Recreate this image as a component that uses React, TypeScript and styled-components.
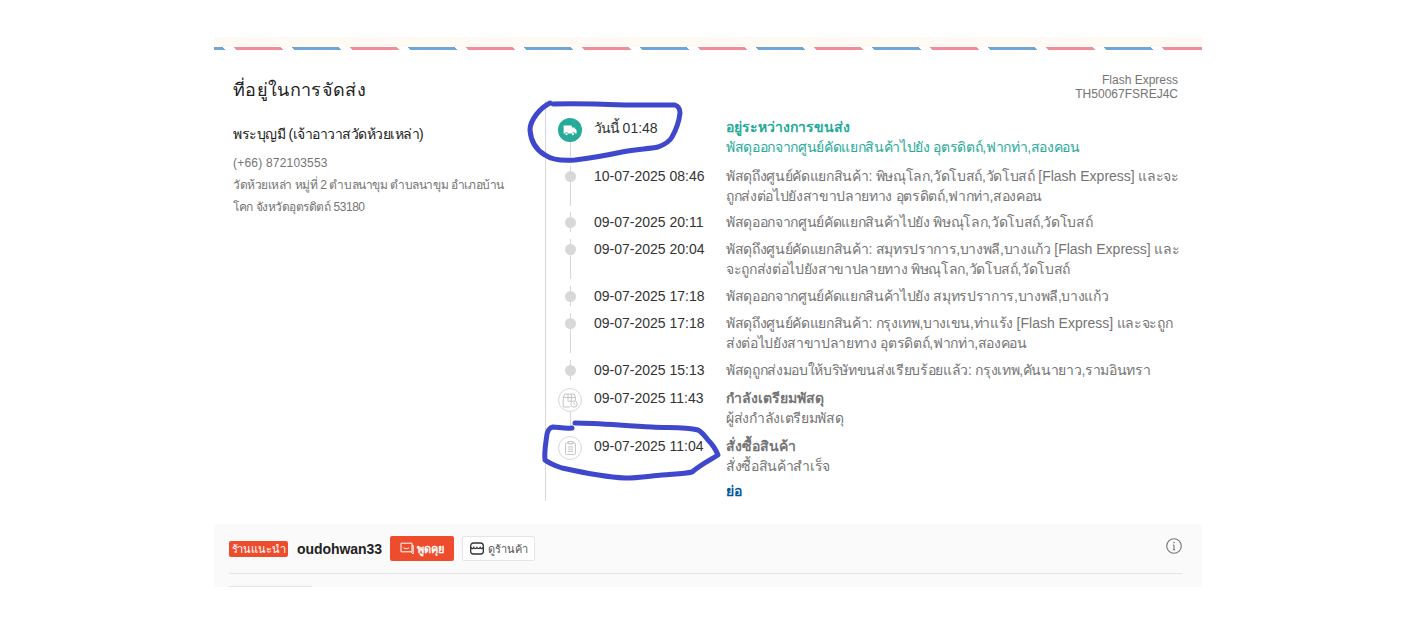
import React from "react";
import styled, { createGlobalStyle } from "styled-components";

const Global = createGlobalStyle`
  html, body { margin: 0; padding: 0; background: #fff; }
  body { font-family: "Liberation Sans", "Noto Sans", sans-serif; }
`;

const Page = styled.div`
  position: relative;
  width: 1416px;
  height: 624px;
  overflow: hidden;
  background: #fff;
  padding-top: 37px;
  box-sizing: border-box;
`;

const Card = styled.div`
  width: 988px;
  margin: 0 auto;
  height: 550px;
  overflow: hidden;
`;

const Cream = styled.div`
  height: 10px;
  background: #fffbf4;
`;

const Stripe = styled.div`
  height: 3px;
  background-image: repeating-linear-gradient(45deg, #6fa6d6, #6fa6d6 33px, transparent 0, transparent 41px, #f18d9b 0, #f18d9b 74px, transparent 0, transparent 82px);
  background-size: 116.0155px 3px;
  background-position-x: -35px;
`;

const Main = styled.div`
  display: flex;
  height: 474px;
  padding: 0 24px 24px 18px;
  box-sizing: border-box;
`;

const AddressCol = styled.div`
  width: 313px;
  flex: none;
`;

const Title = styled.h2`
  margin: 27px 0 0 1px;
  font-size: 18px;
  line-height: 26px;
  font-weight: 400;
  letter-spacing: 0.35px;
  color: #222;
`;

const Name = styled.div`
  margin: 21px 0 0 1px;
  font-size: 14px;
  line-height: 20px;
  letter-spacing: -0.5px;
  color: #222;
`;

const Contact = styled.div`
  margin: 8px 0 0 1px;
  font-size: 12px;
  line-height: 22px;
  color: #757575;
`;

const AddressLine = styled.div<{ $latin?: boolean }>`
  white-space: nowrap;
  letter-spacing: ${(p) => (p.$latin ? "0.2px" : "-0.45px")};
`;

const TrackCol = styled.div`
  flex: 1;
  min-width: 0;
  display: flex;
  flex-direction: column;
`;

const Carrier = styled.div`
  margin-top: 23px;
  height: 28px;
  font-size: 12px;
  line-height: 14px;
  color: #757575;
  text-align: right;
`;

const Timeline = styled.div`
  flex: 1;
  border-left: 1px solid #d8d8d8;
  display: flex;
  flex-direction: column;
  padding-top: 17px;
`;

const Row = styled.div<{ $pad: number }>`
  display: flex;
  padding-bottom: ${(p) => p.$pad}px;
`;

const NodeCol = styled.div<{ $edge?: "first" | "last" }>`
  width: 48px;
  flex: none;
  display: flex;
  justify-content: center;
  align-items: flex-start;
  background-image: linear-gradient(#d8d8d8, #d8d8d8);
  background-repeat: no-repeat;
  background-position: ${(p) => (p.$edge === "first" ? "center 12px" : "center top")};
  background-size: ${(p) => (p.$edge === "last" ? "1px 12px" : "1px 100%")};
`;

const Dot = styled.span`
  width: 11px;
  height: 11px;
  margin-top: 5px;
  border-radius: 50%;
  background: #d8d8d8;
`;

const Badge = styled.span<{ $active?: boolean }>`
  width: 24px;
  height: 24px;
  box-sizing: border-box;
  border-radius: 50%;
  display: flex;
  align-items: center;
  justify-content: center;
  background: ${(p) => (p.$active ? "#26aa99" : "#fff")};
  border: ${(p) => (p.$active ? "none" : "1px solid #d8d8d8")};
`;

const Time = styled.div`
  width: 132px;
  flex: none;
  font-size: 14px;
  line-height: 20px;
  color: #333;
`;

const ThaiDay = styled.span`
  letter-spacing: -1.1px;
`;

const Desc = styled.div<{ $active?: boolean }>`
  width: 452px;
  flex: none;
  font-size: 14px;
  line-height: 20px;
  color: ${(p) => (p.$active ? "#26aa99" : "#757575")};
`;

const DescLine = styled.div`
  white-space: nowrap;
  letter-spacing: -0.33px;
`;

const Latin = styled.span`
  letter-spacing: 0;
`;

const Status = styled.div<{ $tight?: boolean }>`
  font-weight: 700;
  line-height: ${(p) => (p.$tight ? "19px" : "20px")};
`;

const Collapse = styled.div`
  margin-left: 180px;
  font-size: 14px;
  line-height: 20px;
  font-weight: 700;
  color: #05589c;
`;

const Shop = styled.div`
  height: 63px;
  background: #fafafa;
  padding: 0 20px 0 15px;
  box-sizing: border-box;
  overflow: hidden;
`;

const ShopBar = styled.div`
  height: 49px;
  display: flex;
  align-items: center;
  border-bottom: 1px solid #e5e5e5;
`;

const Tag = styled.span`
  height: 16px;
  width: 59px;
  text-align: center;
  background: #ee4d2d;
  border-radius: 2px;
  color: #fff;
  font-size: 11px;
  line-height: 16px;
  letter-spacing: -0.15px;
  white-space: nowrap;
`;

const ShopName = styled.span`
  margin-left: 9px;
  width: 85px;
  font-size: 14px;
  font-weight: 700;
  letter-spacing: -0.05px;
  color: #222;
`;

const ChatBtn = styled.button`
  margin-left: 8px;
  height: 25px;
  width: 64px;
  padding: 0;
  border: none;
  border-radius: 2px;
  background: #ee4d2d;
  color: #fff;
  font: inherit;
  font-size: 11px;
  font-weight: 700;
  display: flex;
  align-items: center;
  justify-content: center;
  gap: 3px;
`;

const ShopBtn = styled.button`
  margin-left: 8px;
  height: 25px;
  width: 73px;
  padding: 0;
  border: 1px solid #e5e5e5;
  border-radius: 2px;
  background: #fff;
  color: #555;
  font: inherit;
  font-size: 11px;
  display: flex;
  align-items: center;
  justify-content: center;
  gap: 4px;
`;

const InfoBtn = styled.span`
  margin-left: auto;
  display: flex;
  margin-top: -6px;
  margin-right: 0.5px;
`;

const NextBar = styled.div`
  margin-top: 12px;
  width: 83px;
  height: 1px;
  background: #e5e5e5;
`;

const Scribble = styled.svg`
  position: absolute;
  inset: 0;
  pointer-events: none;
`;

const TruckIcon = () => (
  <svg width="14" height="11" viewBox="0 0 14 11" fill="#fff">
    <path d="M0.600 0.500h8.200v2h2.600l2.200 2.900v3.100h-1.300a1.700 1.700 0 0 0-3.300 0H5.200a1.700 1.700 0 0 0-3.300 0H0.600z" />
    <circle cx="3.500" cy="9.100" r="1.200" />
    <circle cx="10" cy="9.100" r="1.200" />
  </svg>
);

const PackIcon = () => (
  <svg width="16" height="15" viewBox="0 0 16 15" fill="none" stroke="#c4c4c4" strokeWidth="1">
    <path d="M3 1h9l1.500 3.500v3M3 1L1.200 4.500V14h7M1.200 4.500h12.300M6 1.200v7h3.400V1.200" />
    <circle cx="12" cy="11" r="3.200" fill="#fff" />
    <path d="M12 9.400V11l1.200.8" />
  </svg>
);

const ClipIcon = () => (
  <svg width="11" height="14" viewBox="0 0 11 14" fill="none" stroke="#c4c4c4" strokeWidth="1">
    <rect x="0.600" y="1.800" width="9.800" height="11.600" rx="0.800" />
    <rect x="3.200" y="0.600" width="4.600" height="2.200" fill="#fff" />
    <path d="M2.800 6h5.400M2.800 8.200h5.400M2.800 10.400h5.400" />
  </svg>
);

const ChatIcon = () => (
  <svg width="14" height="13" viewBox="0 0 14 13" fill="none" stroke="#fff" strokeWidth="1">
    <path d="M1 1.200h11v8.600H1zM12 3.500h1.200v8.500l-2.200-2.200" />
    <path d="M3.500 5.800c1.500 1.200 4 1.200 5.500 0" />
  </svg>
);

const StoreIcon = () => (
  <svg width="14" height="13" viewBox="0 0 14 13" fill="none" stroke="#333" strokeWidth="1.300">
    <path d="M3.500 1h7c1.800 0 2.800 1.400 2.800 3v5.500c0 1.500-1 2.500-2.500 2.500H3.200C1.700 12 .7 11 .7 9.500V4C.7 2.400 1.700 1 3.500 1z" />
    <path d="M.7 5.500c1.200 1.400 2.600 1.400 3.200 0 .7 1.400 2.300 1.400 3.100 0 .8 1.400 2.400 1.400 3.100 0 .6 1.400 2 1.400 3.200 0" />
  </svg>
);

const InfoIcon = () => (
  <svg width="16" height="16" viewBox="0 0 16 16" fill="none" stroke="#757575" strokeWidth="1.100">
    <circle cx="8" cy="8" r="7.300" />
    <path d="M8 7v4.800M6.800 11.800h2.400M6.900 7h1.100" />
    <circle cx="8" cy="4.600" r="0.800" fill="#757575" stroke="none" />
  </svg>
);

type Entry = {
  time: string;
  lines: string[];
  pad: number;
};

const middle: Entry[] = [
  { time: "10-07-2025 08:46", lines: ["พัสดุถึงศูนย์คัดแยกสินค้า: พิษณุโลก,วัดโบสถ์,วัดโบสถ์ [Flash Express] และจะ", "ถูกส่งต่อไปยังสาขาปลายทาง อุตรดิตถ์,ฟากท่า,สองคอน"], pad: 6 },
  { time: "09-07-2025 20:11", lines: ["พัสดุออกจากศูนย์คัดแยกสินค้าไปยัง พิษณุโลก,วัดโบสถ์,วัดโบสถ์"], pad: 7 },
  { time: "09-07-2025 20:04", lines: ["พัสดุถึงศูนย์คัดแยกสินค้า: สมุทรปราการ,บางพลี,บางแก้ว [Flash Express] และ", "จะถูกส่งต่อไปยังสาขาปลายทาง พิษณุโลก,วัดโบสถ์,วัดโบสถ์"], pad: 7 },
  { time: "09-07-2025 17:18", lines: ["พัสดุออกจากศูนย์คัดแยกสินค้าไปยัง สมุทรปราการ,บางพลี,บางแก้ว"], pad: 7 },
  { time: "09-07-2025 17:18", lines: ["พัสดุถึงศูนย์คัดแยกสินค้า: กรุงเทพ,บางเขน,ท่าแร้ง [Flash Express] และจะถูก", "ส่งต่อไปยังสาขาปลายทาง อุตรดิตถ์,ฟากท่า,สองคอน"], pad: 7 },
  { time: "09-07-2025 15:13", lines: ["พัสดุถูกส่งมอบให้บริษัทขนส่งเรียบร้อยแล้ว: กรุงเทพ,คันนายาว,รามอินทรา"], pad: 8 },
];

const renderLine = (line: string) => {
  const mark = "[Flash Express]";
  const at = line.indexOf(mark);
  if (at < 0) return <DescLine key={line}>{line}</DescLine>;
  return (
    <DescLine key={line}>
      {line.slice(0, at)}
      <Latin>{mark}</Latin>
      {line.slice(at + mark.length)}
    </DescLine>
  );
};

export default function App() {
  return (
    <Page>
      <Global />
      <Card>
        <Cream />
        <Stripe />
        <Main>
          <AddressCol>
            <Title>ที่อยู่ในการจัดส่ง</Title>
            <Name>พระบุญมี (เจ้าอาวาสวัดห้วยเหล่า)</Name>
            <Contact>
              <AddressLine $latin>(+66) 872103553</AddressLine>
              <AddressLine>วัดห้วยเหล่า หมู่ที่ 2 ตำบลนาขุม ตำบลนาขุม อำเภอบ้าน</AddressLine>
              <AddressLine>โคก จังหวัดอุตรดิตถ์ 53180</AddressLine>
            </Contact>
          </AddressCol>
          <TrackCol>
            <Carrier>
              Flash Express
              <br />
              TH50067FSREJ4C
            </Carrier>
            <Timeline>
              <Row $pad={9}>
                <NodeCol $edge="first">
                  <Badge $active>
                    <TruckIcon />
                  </Badge>
                </NodeCol>
                <Time>
                  <ThaiDay>วันนี้</ThaiDay> 01:48
                </Time>
                <Desc $active>
                  <Status $tight>อยู่ระหว่างการขนส่ง</Status>
                  {renderLine("พัสดุออกจากศูนย์คัดแยกสินค้าไปยัง อุตรดิตถ์,ฟากท่า,สองคอน")}
                </Desc>
              </Row>
              {middle.map((entry, i) => (
                <Row key={i} $pad={entry.pad}>
                  <NodeCol>
                    <Dot />
                  </NodeCol>
                  <Time>{entry.time}</Time>
                  <Desc>{entry.lines.map(renderLine)}</Desc>
                </Row>
              ))}
              <Row $pad={8}>
                <NodeCol>
                  <Badge>
                    <PackIcon />
                  </Badge>
                </NodeCol>
                <Time>09-07-2025 11:43</Time>
                <Desc>
                  <Status>กำลังเตรียมพัสดุ</Status>
                  {renderLine("ผู้ส่งกำลังเตรียมพัสดุ")}
                </Desc>
              </Row>
              <Row $pad={5}>
                <NodeCol $edge="last">
                  <Badge>
                    <ClipIcon />
                  </Badge>
                </NodeCol>
                <Time>09-07-2025 11:04</Time>
                <Desc>
                  <Status>สั่งซื้อสินค้า</Status>
                  {renderLine("สั่งซื้อสินค้าสำเร็จ")}
                </Desc>
              </Row>
              <Collapse>ย่อ</Collapse>
            </Timeline>
          </TrackCol>
        </Main>
        <Shop>
          <ShopBar>
            <Tag>ร้านแนะนำ</Tag>
            <ShopName>oudohwan33</ShopName>
            <ChatBtn>
              <ChatIcon />
              พูดคุย
            </ChatBtn>
            <ShopBtn>
              <StoreIcon />
              ดูร้านค้า
            </ShopBtn>
            <InfoBtn>
              <InfoIcon />
            </InfoBtn>
          </ShopBar>
          <NextBar />
        </Shop>
      </Card>
      <Scribble width="1416" height="624" viewBox="0 0 1416 624" fill="none" stroke="#3f48cc" strokeWidth="5" strokeLinecap="round" strokeLinejoin="round">
        <path d="M550 103C540 108 530 120 530 130C531 143 538 151 545 155C552 160 562 161 575 160C592 158 608 155 622 152C636 149 648 149 658 147C666 144 670 141 672 137C676 130 679 122 680 113C680 108 678 106 675 105C660 105 645 105 625 105C600 104 575 103 553 104" />
        <path d="M572 428C565 429 558 427 553 427C549 428 548 430 547 434C546 442 544 452 545 460C550 464 556 466 562 468C580 472 602 477 625 478C638 478 650 476 662 475C672 474 684 474 692 472C700 465 710 460 718 455C716 450 712 444 708 440C705 436 702 432 698 430C685 427 668 428 652 427C625 426 600 423 575 423" />
      </Scribble>
    </Page>
  );
}
